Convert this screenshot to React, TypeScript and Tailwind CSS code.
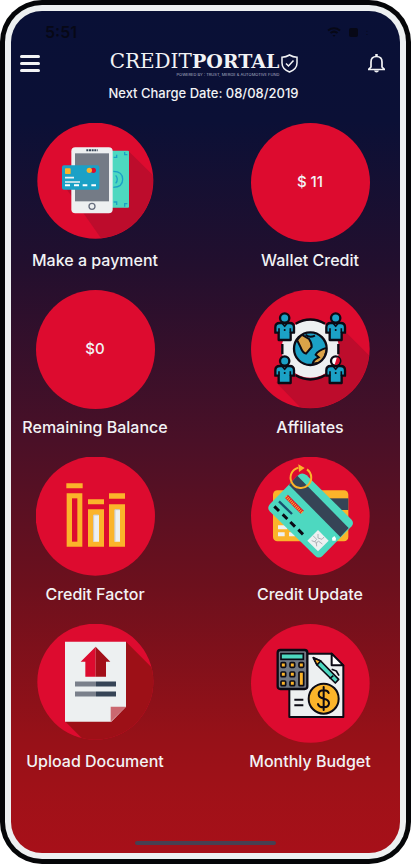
import type { ReactNode } from "react";

const RED = "#dd0b2f";
const GOLD = "#fbb42a";
const PAPER = "#edf0f1";
const TEAL = "#4dd8c0";
const BLUE = "#1ba1c6";
const INK = "#0b0a14";
const SLATE = "#364456";

function Disc({ children, top = 23 }: { children: ReactNode; top?: number }) {
  return (
    <svg className="size-[119px]" viewBox={`48 ${top} 357 357`} aria-hidden="true">
      {children}
    </svg>
  );
}

function PaymentIcon() {
  return (
    <Disc>
      <clipPath id="payDisc"><circle cx="226" cy="196" r="173" /></clipPath>
      <circle cx="226" cy="196" r="174" fill={RED} />
      <path d="M326 108 460 240V400H265L140 222Z" fill="#bd0c2c" clipPath="url(#payDisc)" />
      <rect x="265" y="106" width="62" height="171" rx="3" fill={TEAL} />
      <g fill="none" stroke={BLUE} strokeWidth="4">
        <path d="M280 168q28 0 28 24t-28 24M287 180q10 12 0 24M281 126h9v-8M322 118h-8v-8M281 260h9v9M322 265h-8v9" />
      </g>
      <rect x="154" y="96" width="124" height="198" rx="12" fill={PAPER} />
      <rect x="165" y="114" width="102" height="144" fill="#747b86" />
      <path d="M199 105h34" stroke={SLATE} strokeWidth="6" strokeDasharray="6 2" />
      <circle cx="216" cy="273" r="9" fill="none" stroke="#687080" strokeWidth="4" />
      <rect x="126" y="150" width="112" height="73" rx="6" fill={BLUE} />
      <rect x="135" y="159" width="17" height="17" rx="2" fill={GOLD} />
      <circle cx="220" cy="165" r="8" fill={RED} />
      <circle cx="208" cy="165" r="8" fill={GOLD} />
      <path d="M135 187h27M135 200h45" stroke={PAPER} strokeWidth="5" />
      <path d="M135 210h15M162 210h15M188 210h14M214 210h14" stroke="#fff" strokeWidth="6" />
    </Disc>
  );
}

function Person({ x, y, pale }: { x: number; y: number; pale?: boolean }) {
  return (
    <g transform={`translate(${x} ${y})`} stroke={INK} strokeWidth="7" strokeLinejoin="round">
      <path d="M-28 53V37Q-28 24-15 24H15Q28 24 28 37V53H18V75H-18V53Z" fill={BLUE} />
      <path d="M-17 53V40M17 53V40M-8 24 0 34 8 24" fill="none" strokeWidth="5" />
      <circle r="14" cy="9" fill={pale ? "#fff" : BLUE} />
      {pale && <path d="M4-3A12 12 0 0 1-3 20Z" fill={RED} stroke="none" />}
      <circle cx="0" cy="45" r="3" fill={INK} stroke="none" />
    </g>
  );
}

function AffiliatesIcon() {
  return (
    <Disc>
      <clipPath id="affDisc"><circle cx="226" cy="200" r="177" /></clipPath>
      <clipPath id="affGlobe"><circle cx="226" cy="199" r="47" /></clipPath>
      <circle cx="226" cy="200" r="178" fill={RED} />
      <path d="M328 145 460 276V400H220L123 300Z" fill="#bd0c2c" clipPath="url(#affDisc)" />
      <circle cx="226" cy="200" r="86" fill={PAPER} />
      <g fill="none" stroke={INK} strokeWidth="7">
        <path d="M182 124Q226 99 270 124M182 279Q226 304 270 279M142 185v31M310 185v31" />
      </g>
      <circle cx="226" cy="199" r="47" fill={BLUE} />
      <g clipPath="url(#affGlobe)" fill="#dba348" stroke={INK} strokeWidth="6">
        <path d="M186 173 200 157 222 170Q231 183 230 194L213 214Q202 210 197 195Z" />
        <path d="M277 196Q249 204 242 217L251 225Q235 232 233 244L264 240Z" />
        <path d="M212 157Q222 168 240 160" fill="none" />
      </g>
      <circle cx="226" cy="199" r="49" fill="none" stroke={INK} strokeWidth="7" />
      <Person x={149} y={98} />
      <Person x={302} y={98} />
      <Person x={149} y={227} />
      <Person x={302} y={227} pale />
    </Disc>
  );
}

function FactorIcon() {
  return (
    <Disc>
      <circle cx="226" cy="200" r="179" fill={RED} />
      <path d="M139 102h49v15h-49ZM204 150h48v15h-48ZM267 132h48v16h-48Z" fill={GOLD} />
      <path d="M140 132h47v160h-47ZM204 180h48v112h-48ZM267 165h48v127h-48Z" fill={GOLD} />
      <path d="M156 147h16v130h-16Z" fill={RED} />
      <path d="M220 197h17v80h-17ZM284 181h16v96h-16Z" fill={PAPER} />
      <path d="M221 277v-80h15M285 277v-96h14" fill="none" stroke="#c9c9cf" strokeWidth="3" />
    </Disc>
  );
}

function UpdateIcon() {
  return (
    <Disc>
      <circle cx="226" cy="200" r="178" fill={RED} />
      <rect x="114" y="123" width="226" height="153" rx="13" fill={GOLD} />
      <path d="M270 147h70v35h-70Z" fill={SLATE} />
      <path d="M129 234h28M129 255h20M162 255h18" stroke={PAPER} strokeWidth="12" />
      <path d="M105 164 188 79Q201 66 215 78L350 211Q358 221 350 231L263 319Q252 330 240 319L104 186Q95 175 105 164Z" fill={TEAL} />
      <path d="M187 79 341 236 316 263 162 107Z" fill={SLATE} />
      <path d="M154 141 202 189" stroke={RED} strokeWidth="13" />
      <path d="M153 141 202 190" stroke={GOLD} strokeWidth="9" strokeDasharray="3 3" />
      <path d="M132 156 171 194" stroke="#18506e" strokeWidth="7" />
      <path d="M118 171 132 185M143 195 157 209M166 218 180 232M190 241 204 255" stroke={INK} strokeWidth="9" />
      <path d="M249 242 281 274 249 306 217 274Z" fill={PAPER} />
      <path d="M234 259 245 270 238 278M249 254v12l12 4 6-7M230 274l14 5 1 12M262 284l-12-9-7 8" fill="none" stroke="#aeb3b8" strokeWidth="3" />
      <path d="M291 266 298 260 303 267 302 274H292Z" fill="#fff" />
      <path d="M216 60A31 31 0 1 1 190 55" fill="none" stroke={GOLD} strokeWidth="6" />
      <path d="M190 45 209 56 192 68Z" fill={GOLD} />
    </Disc>
  );
}

function UploadIcon() {
  return (
    <Disc top={28}>
      <clipPath id="upDisc"><circle cx="226" cy="201" r="174" /></clipPath>
      <circle cx="226" cy="201" r="174" fill={RED} />
      <path d="M318 81 420 183V400H215L135 320Z" fill="#9d1017" clipPath="url(#upDisc)" />
      <path d="M135 81H318V276L274 321H135Z" fill={PAPER} />
      <path d="M272 276H318L272 321Z" fill="#cb6870" />
      <path d="M227 96V186H196V141H182Z" fill={RED} />
      <path d="M227 96 271 141H258V186H227Z" fill="#a20f19" />
      <path d="M165 208h63M165 238h63" stroke="#7a808b" strokeWidth="15" />
      <path d="M228 208h60M228 238h60" stroke={SLATE} strokeWidth="15" />
    </Disc>
  );
}

function BudgetIcon() {
  return (
    <Disc top={28}>
      <circle cx="226" cy="206" r="178" fill={RED} />
      <path d="M163 117H290L325 153V307H163Z" fill={PAPER} stroke={INK} strokeWidth="6" strokeLinejoin="round" />
      <path d="M290 117V152H325Z" fill="#fff" stroke={INK} strokeWidth="6" strokeLinejoin="round" />
      <rect x="128" y="106" width="89" height="117" rx="8" fill="#737984" stroke={INK} strokeWidth="7" />
      <rect x="138" y="117" width="67" height="17" fill={TEAL} stroke={INK} strokeWidth="5" />
      <g fill={GOLD} stroke={INK} strokeWidth="5">
        {[151, 179, 206].map((y) =>
          [145, 172, 199].map((x) =>
            x === 199 && y > 151 ? null : <rect key={`${x}-${y}`} x={x - 7} y={y - 7} width="14" height="14" rx="3" />,
          ),
        )}
        <rect x="192" y="172" width="14" height="41" rx="2" />
      </g>
      <g strokeLinejoin="round" stroke={INK} strokeWidth="5">
        <path d="M235 129 257 139 311 194 301 205 246 151Z" fill={TEAL} />
        <path d="M257 139 246 151 235 129Z" fill={GOLD} />
        <path d="M295 183 284 192M290 164l14 5 8 14" fill="none" />
      </g>
      <path d="M178 255h27M178 272h27" stroke={INK} strokeWidth="6" />
      <circle cx="266" cy="252" r="45" fill={GOLD} stroke={INK} strokeWidth="6" />
      <path d="M281 235Q278 227 266 227 251 227 251 239 251 249 266 252 282 255 282 266 282 278 266 278 251 278 249 268M266 217v69" fill="none" stroke={INK} strokeWidth="6" strokeLinecap="round" />
    </Disc>
  );
}

function Amount({ value }: { value: string }) {
  return (
    <span className="flex size-[119px] items-center justify-center rounded-full bg-[#dd0b2f] text-[15px] font-medium">
      {value}
    </span>
  );
}

const tiles: { label: string; art: ReactNode }[] = [
  { label: "Make a payment", art: <PaymentIcon /> },
  { label: "Wallet Credit", art: <Amount value="$ 11" /> },
  { label: "Remaining Balance", art: <Amount value="$0" /> },
  { label: "Affiliates", art: <AffiliatesIcon /> },
  { label: "Credit Factor", art: <FactorIcon /> },
  { label: "Credit Update", art: <UpdateIcon /> },
  { label: "Upload Document", art: <UploadIcon /> },
  { label: "Monthly Budget", art: <BudgetIcon /> },
];

function StatusBar() {
  return (
    <div className="flex h-[38px] items-center justify-between pt-1 pr-[26px] pl-[34px] text-[#070816]">
      <span className="text-base font-semibold">5:51</span>
      <div className="flex items-center gap-2" aria-hidden="true">
        <svg className="h-[10px] w-[14px]" viewBox="0 0 14 10" fill="none" stroke="currentColor" strokeWidth="2">
          <path d="M1 3.5Q7-1 13 3.5M3.5 6Q7 3.300 10.500 6" />
          <path d="M5.500 8h3L7 10Z" fill="currentColor" stroke="none" />
        </svg>
        <span className="size-[9px] rounded-xs bg-current" />
        <span className="w-2 text-[8px]">:</span>
      </div>
    </div>
  );
}

function Header() {
  return (
    <header className="flex items-center justify-between pr-[15px] pl-[9px]">
      <button type="button" aria-label="Menu" className="flex h-6 w-5 flex-col justify-center gap-1">
        <span className="h-[3px] rounded-full bg-[#f2f3f5]" />
        <span className="h-[3px] rounded-full bg-[#f2f3f5]" />
        <span className="h-[3px] rounded-full bg-[#f2f3f5]" />
      </button>
      <div className="flex items-center gap-[2px]">
        <div className="flex flex-col items-end">
          <h1 className="font-['DejaVu_Serif',serif] text-[20px] leading-6">
            CREDIT<b className="text-[19px]">PORTAL</b>
          </h1>
          <p className="text-[4px] leading-1 text-[#a9aec2]">POWERED BY : TRUST, MERGE &amp; AUTOMOTIVE FUND</p>
        </div>
        <svg className="h-[19px] w-[17px]" viewBox="0 0 17 19" fill="none" stroke="currentColor" strokeWidth="1.500" aria-hidden="true">
          <path d="M8.500 1Q12 3.200 16 3.200V9Q16 15 8.500 18 1 15 1 9V3.200Q5 3.200 8.500 1Z" />
          <path d="m5 9.500 2.500 2.500L12.500 6.500" />
        </svg>
      </div>
      <button type="button" aria-label="Notifications">
        <svg className="h-5 w-[17px]" viewBox="0 0 17 20" fill="none" stroke="currentColor" strokeWidth="1.700" aria-hidden="true">
          <path d="M.5 16.500H16.500L14 14V9Q14 3.500 8.500 3.500T3 9V14L.5 16.500Z" strokeLinejoin="round" />
          <path d="M8.500 1V3.500" strokeWidth="2.500" />
          <path d="M6 17.500h5Q10.500 19.500 8.500 19.500T6 17.500Z" fill="currentColor" stroke="none" />
        </svg>
      </button>
    </header>
  );
}

export default function App() {
  return (
    <div className="flex min-h-screen flex-col bg-white font-[Inter,sans-serif] text-[#f2f3f5]">
      <div className="flex grow flex-col rounded-[42px] bg-[#050608] p-[5px]">
        <div className="flex grow flex-col rounded-[37px] bg-[#edf0f1] p-[6px]">
          <main className="flex grow flex-col rounded-[31px] bg-[linear-gradient(180deg,#091036_0%,#0b1036_13%,#220f2e_30%,#4a1027_51%,#6c101d_68%,#961118_86%,#9f1118_92%,#a71019_100%)]">
            <StatusBar />
            <Header />
            <p className="mt-1 pr-1 text-center text-[13px] leading-6 font-medium">Next Charge Date: 08/08/2019</p>
            <div className="mt-[18px] flex flex-wrap justify-between gap-y-[18px] pr-[18px] pl-3">
              {tiles.map((tile) => (
                <button key={tile.label} type="button" className="flex w-36 flex-col items-center gap-1.5">
                  {tile.art}
                  <span className="text-base leading-6 font-medium whitespace-nowrap">{tile.label}</span>
                </button>
              ))}
            </div>
            <div className="mx-auto mt-auto mb-2 h-1 w-[36%] rounded-full bg-[#484052]" />
          </main>
        </div>
      </div>
    </div>
  );
}
